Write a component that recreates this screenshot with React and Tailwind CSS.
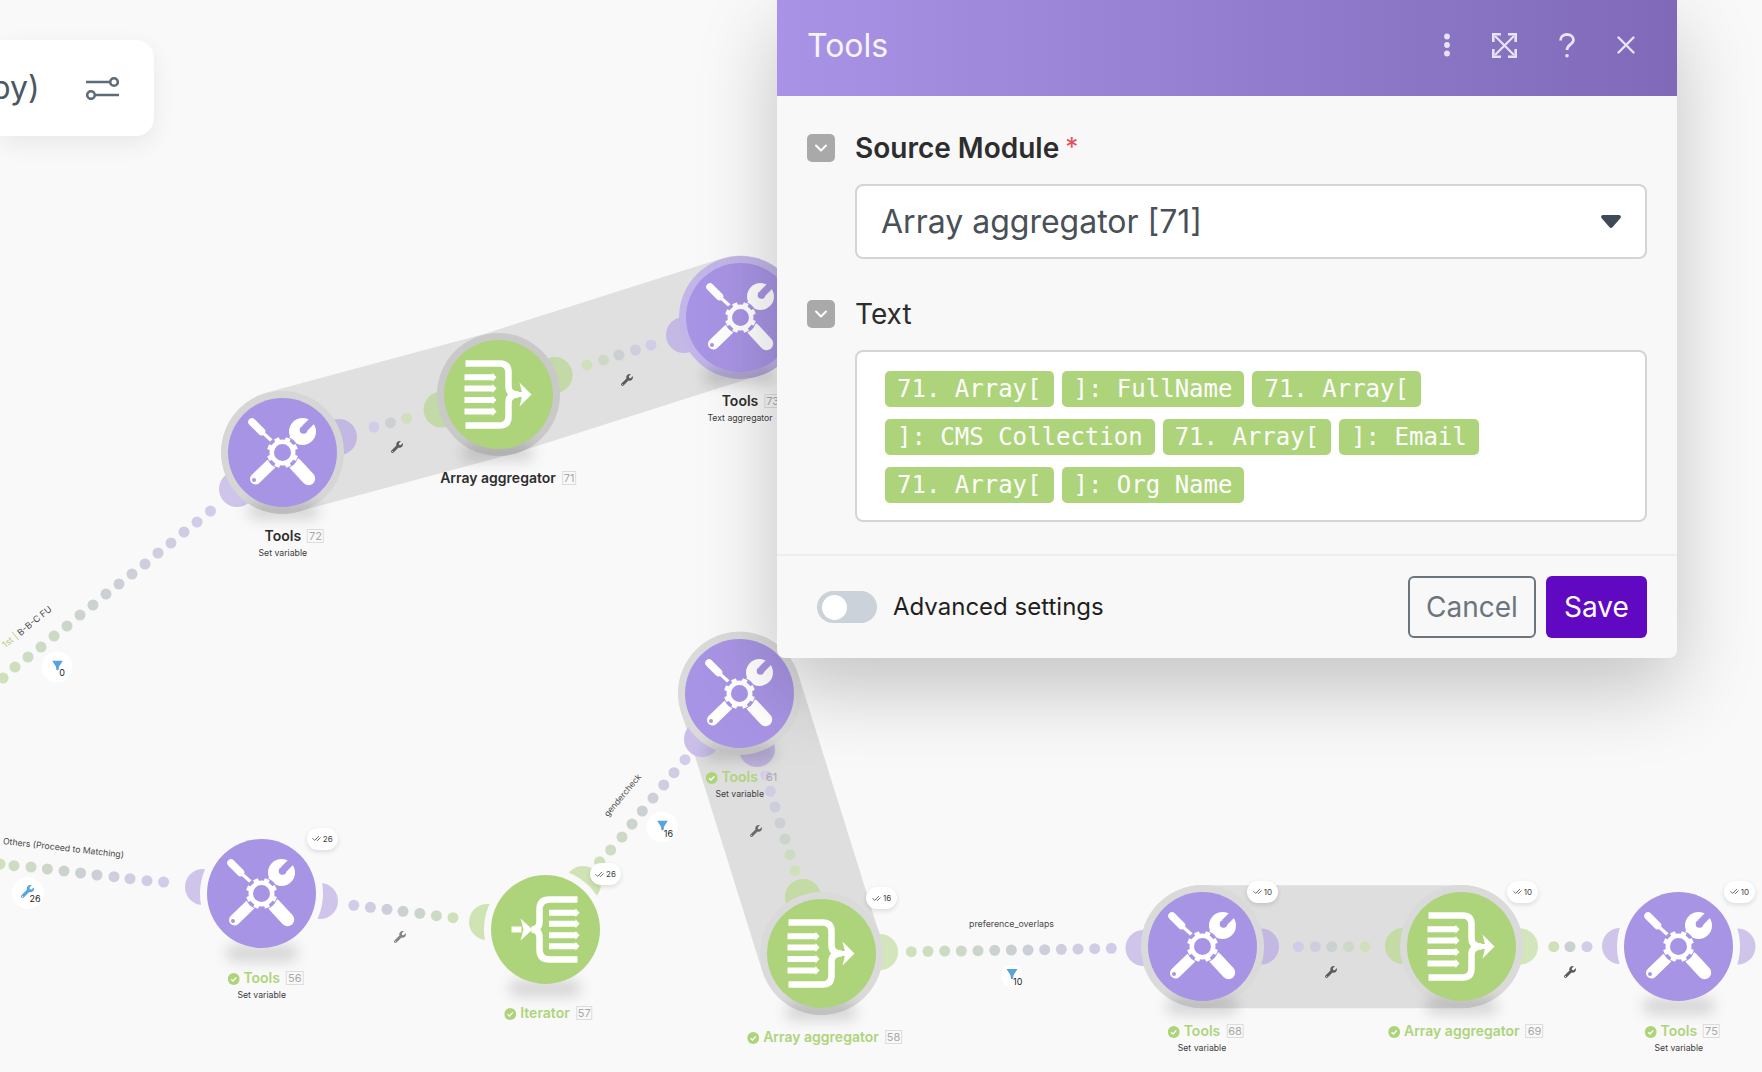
import React from 'react';
import { ChevronDown, CheckCheck } from 'lucide-react';
import { FaWrench } from 'react-icons/fa';

const PURPLE = '#a894e4';
const GREEN = '#aed47b';

const hex = (c) => [1, 3, 5].map((i) => parseInt(c.slice(i, i + 2), 16));
const mix = (a, b, t) => {
  const A = hex(a), B = hex(b);
  return `rgb(${A.map((v, i) => Math.round(v + (B[i] - v) * t)).join(',')})`;
};
const ramp = (t) => (t < 0.5 ? mix('#cfe0bb', '#cbd0d3', t * 2) : mix('#cbd0d3', '#d2cbea', (t - 0.5) * 2));

// each run of dots goes from its green end to its purple end
const dotRuns = [
  [[3, 678], [15, 667], [28, 657], [41, 647], [54, 636], [67, 626], [80, 615], [93, 605], [106, 594], [119, 584], [132, 574], [145, 564], [158, 553], [171, 543], [184, 532], [197, 522], [210.5, 511]],
  [[406.6, 418.3], [390.5, 422.7], [374, 427]],
  [[587, 365], [603.5, 360], [619, 355], [635.5, 350], [651, 345]],
  [[0, 864], [14, 865.7], [31, 867], [47.4, 869], [64, 871], [80.6, 873], [97, 875], [114, 876.7], [130, 878.7], [147, 880.7], [163.6, 882]],
  [[453, 917.7], [436.4, 915.7], [419.8, 913.3], [403, 911.3], [387, 909.3], [370.4, 907.3], [353.8, 905.3]],
  [[599.6, 861.7], [610.7, 850], [622, 837], [632, 824], [642.3, 811], [653, 798], [663.7, 785], [674, 772.7], [685, 759.7]],
  [[795, 870.7], [790, 854.7], [785, 839], [780, 823], [775, 807], [770.3, 791.3], [765.7, 775.3]],
  [[911.3, 951.7], [928, 951.3], [944.7, 951], [961.3, 951], [978, 950.7], [994.7, 950.3], [1011.3, 950], [1028, 950], [1044.7, 949.7], [1061.3, 949.3], [1078, 949], [1094.7, 948.7], [1111.3, 948.3]],
  [[1365, 946.7], [1348.6, 946.7], [1331.7, 946.7], [1315.3, 946.7], [1298.4, 946.7]],
  [[1553.8, 946.7], [1570, 946.7], [1587, 946.7]],
];

const moons = [
  [237, 489, '#cfc5ea'], [339, 437, '#c3b8e2'], [441.6, 409.5, '#c3d9a8'], [554.6, 375, '#c3d9a8'], [684, 335, '#c4b8e4'],
  [203, 887, '#cfc5ea'], [320, 901, '#cfc5ea'], [487, 922, '#d0e3b5'], [583, 884, '#d0e3b5'],
  [702, 739, '#cbbfe9'], [757, 749, '#c0b4df'], [803, 897, '#c4dba6'], [880, 952, '#d3e5ba'],
  [1143.5, 948, '#cfc5ea'], [1261, 946.5, '#c3b8e2'], [1403, 946, '#c4dba6'], [1520, 946.5, '#d3e5ba'],
  [1620, 946, '#cfc5ea'], [1737.5, 946.5, '#cfc5ea'],
];

const nodes = [
  { x: 282.8, y: 452, kind: 'tools', name: 'Tools', idx: 72, sub: 'Set variable', ring: 'bg-[#d6d6d6]' },
  { x: 498, y: 394, kind: 'agg', name: 'Array aggregator', idx: 71, ring: 'bg-[#c9c9c9]' },
  { x: 740, y: 317, kind: 'tools', name: 'Tools', idx: 73, sub: 'Text aggregator', ring: 'bg-[#c2b6e8]' },
  { x: 739.7, y: 693, kind: 'tools', name: 'Tools', idx: 61, sub: 'Set variable', ok: true, ring: 'bg-[#dadada]' },
  { x: 261.7, y: 893.7, kind: 'tools', name: 'Tools', idx: 56, sub: 'Set variable', ok: true, count: 26, ring: 'bg-[#f9f9f9]' },
  { x: 545, y: 929, kind: 'iter', name: 'Iterator', idx: 57, ok: true, count: 26, ring: 'bg-[#f9f9f9]' },
  { x: 821, y: 953, kind: 'agg', name: 'Array aggregator', idx: 58, ok: true, count: 16, ring: 'bg-[#dadada]' },
  { x: 1202, y: 946.7, kind: 'tools', name: 'Tools', idx: 68, sub: 'Set variable', ok: true, count: 10, ring: 'bg-[#dadada]' },
  { x: 1461.8, y: 946.7, kind: 'agg', name: 'Array aggregator', idx: 69, ok: true, count: 10, ring: 'bg-[#dadada]' },
  { x: 1678.8, y: 946.7, kind: 'tools', name: 'Tools', idx: 75, sub: 'Set variable', ok: true, count: 10, ring: 'bg-[#f9f9f9]' },
];

const wrenches = [
  [397, 446.7, '#5c5c5c'], [627, 380, '#5c5c5c'], [400, 936.7, '#858585'], [756, 830.7, '#6a6a6a'], [1331.3, 972, '#5c5c5c'], [1570, 972, '#5c5c5c'],
];

const tagRows = ['71. Array[', ']: FullName', '71. Array[', ']: CMS Collection', '71. Array[', ']: Email', '71. Array[', ']: Org Name'];

function ToolsIcon() {
  const teeth = [0, 45, 90, 135, 180, 225, 270, 315];
  return (
    <svg viewBox="-54.5 -54.5 109 109" className="absolute inset-0 h-full w-full" fill="none">
      <g stroke="#fff" strokeLinecap="round">
        <path d="M-30.5-30.5L-21-21" strokeWidth="7.5" />
        <path d="M-21-21L-9-10" strokeWidth="3.2" strokeLinecap="butt" />
        <path d="M-12 12L-27 26.5" strokeWidth="11" />
        <path d="M13 12L26 26" strokeWidth="13.5" />
        <path d="M8-10L14-16" strokeWidth="9" />
      </g>
      <circle cx="20" cy="-21" r="13.5" fill="#fff" />
      <path d="M22-24L36-38" stroke={PURPLE} strokeWidth="7" />
      <circle cx="21" cy="-22.5" r="3.8" fill={PURPLE} />
      <circle cx="-28.5" cy="27.5" r="2" fill={PURPLE} />
      <circle r="16.5" fill={PURPLE} />
      <circle r="10.75" stroke="#fff" strokeWidth="4.5" />
      {teeth.map((a) => (
        <rect key={a} x="-2.6" y="-15.5" width="5.2" height="4" fill="#fff" transform={`rotate(${a + 22})`} />
      ))}
    </svg>
  );
}

function Arrow({ y, x1, x2 }) {
  return (
    <path d={`M${x1} ${y - 3}H${x2 - 4}V${y - 4.5}L${x2} ${y}L${x2 - 4} ${y + 4.5}V${y + 3}H${x1}Z`} fill="#fff" />
  );
}

function AggIcon() {
  return (
    <svg viewBox="-54.5 -54.5 109 109" className="absolute inset-0 h-full w-full" fill="none">
      <path d="M-33-31H1Q10-31 10-22V-8Q10 0 20 0Q10 0 10 8V22Q10 31 1 31H-33" stroke="#fff" strokeWidth="6.5" />
      <path d="M14-2.5H26V2.5H14Z" fill="#fff" />
      <path d="M21-12L33 0L21 12L24 0Z" fill="#fff" />
      {[-17.3, -6, 5.6, 17].map((y) => (
        <Arrow key={y} y={y} x1={-34} x2={-2} />
      ))}
    </svg>
  );
}

function IterIcon() {
  return (
    <svg viewBox="-54.5 -54.5 109 109" className="absolute inset-0 h-full w-full" fill="none">
      <path d="M32-30H4Q-6-30-6-20V-8Q-6 0-14 0Q-6 0-6 8V20Q-6 30 4 30H32" stroke="#fff" strokeWidth="6.5" />
      <path d="M-34-3H-24V3H-34Z" fill="#fff" />
      <path d="M-25-11L-13 0L-25 11L-22 0Z" fill="#fff" />
      {[-16.7, -5.7, 5.7, 16.7].map((y) => (
        <Arrow key={y} y={y} x1={3.5} x2={34} />
      ))}
    </svg>
  );
}

function OkMark() {
  return (
    <svg viewBox="0 0 12 12" className="absolute top-[4px] right-[calc(100%+4px)] h-[12px] w-[12px]" fill="none">
      <circle cx="6" cy="6" r="6" fill={GREEN} />
      <path d="M3.4 6.2L5.3 8L8.6 4.4" stroke="#fff" strokeWidth="1.3" />
    </svg>
  );
}

function Node({ n }) {
  const Icon = n.kind === 'tools' ? ToolsIcon : n.kind === 'agg' ? AggIcon : IterIcon;
  return (
    <div className="absolute h-0 w-0" style={{ left: n.x, top: n.y }}>
      <div className={`absolute top-[-61.5px] left-[-61.5px] h-[123px] w-[123px] rounded-full ${n.ring}`} />
      <div className="absolute top-[51px] left-[-36px] h-[16px] w-[72px] rounded-full bg-black/15 blur-[7px]" />
      <div
        className={`absolute top-[-54.5px] left-[-54.5px] h-[109px] w-[109px] rounded-full ${
          n.kind === 'tools' ? 'bg-[#a894e4]' : 'bg-[#aed47b]'
        }`}
      >
        <Icon />
      </div>
      <div className="absolute top-[75px] left-0 -translate-x-1/2 whitespace-nowrap text-center">
        <div className="h-[18px] text-[14px] leading-[18px] font-semibold">
          <span className={`relative inline-block ${n.ok ? 'text-[#aed47b]' : 'text-[#2e2e2e]'}`}>
            {n.ok && <OkMark />}
            {n.name}
            <span className="absolute top-[2px] left-[calc(100%+6px)] h-[14px] border border-[#dcdcdc] px-[1px] text-[11px] leading-[12px] font-normal text-[#a8a8a8]">
              {n.idx}
            </span>
          </span>
        </div>
        {n.sub && <div className="mt-[3px] text-[8.7px] leading-[11px] text-[#3c3c3c]">{n.sub}</div>}
      </div>
      {n.count && (
        <div className="absolute top-[-66px] left-[45px] flex h-[22px] w-[31px] items-center justify-center gap-[2px] rounded-full bg-white text-[8px] text-[#444] shadow-[0_2px_5px_rgba(0,0,0,0.12)]">
          <CheckCheck size={9} strokeWidth={2} />
          {n.count}
        </div>
      )}
    </div>
  );
}

function Funnel() {
  return (
    <svg viewBox="0 0 12 11" className="block h-[10px] w-[12px]">
      <path d="M0 0H12L7.8 6.5L7 11H5L4.2 6.5Z" fill="#57a3dd" />
    </svg>
  );
}

function Bubble({ x, y, size, label, children }) {
  return (
    <div
      className="absolute flex -translate-x-1/2 -translate-y-1/2 items-center justify-center rounded-full bg-white"
      style={{ left: x, top: y, width: size, height: size }}
    >
      <span className="-mt-[3px]">{children}</span>
      <span className="absolute top-[54%] left-[56%] text-[9px] leading-[10px] text-[#222]">{label}</span>
    </div>
  );
}

function Canvas() {
  return (
    <>
      <svg className="absolute inset-0 h-full w-full" viewBox="0 0 1762 1072" fill="none">
        <path d="M282.8 452L498 394L740 317" stroke="#e0e0e0" strokeWidth="123" strokeLinecap="round" strokeLinejoin="round" />
        <path d="M739.7 693L821 953" stroke="#dedede" strokeWidth="123" strokeLinecap="round" />
        <path d="M1202 946.7H1461.8" stroke="#dedede" strokeWidth="123" strokeLinecap="round" />
        {moons.map(([x, y, c]) => (
          <circle key={`${x}-${y}`} cx={x} cy={y} r="18" fill={c} />
        ))}
        {dotRuns.map((run, i) =>
          run.map(([x, y], j) => (
            <circle key={`${i}-${j}`} cx={x} cy={y} r="5.5" fill={ramp(run.length > 1 ? j / (run.length - 1) : 0)} />
          ))
        )}
      </svg>

      {nodes.map((n) => (
        <Node key={n.idx} n={n} />
      ))}

      {wrenches.map(([x, y, c]) => (
        <FaWrench
          key={`${x}`}
          size={12}
          color={c}
          className="absolute -translate-x-1/2 -translate-y-1/2"
          style={{ left: x, top: y }}
        />
      ))}

      <Bubble x={57.3} y={666.7} size={31} label="0"><Funnel /></Bubble>
      <Bubble x={662} y={827.3} size={31} label="16"><Funnel /></Bubble>
      <Bubble x={1011.7} y={975.7} size={22} label="10"><Funnel /></Bubble>
      <Bubble x={27.7} y={892.7} size={32} label="26"><FaWrench size={13} color="#57a3dd" /></Bubble>

      <div className="absolute top-[836px] left-[3px] origin-left rotate-[6.5deg] text-[8.7px] leading-[11px] whitespace-nowrap text-[#4a4a4a]">
        Others (Proceed to Matching)
      </div>
      <div className="absolute top-[776px] left-[594px] w-[58px] translate-y-[14px] -rotate-[50deg] text-center text-[8.5px] leading-[11px] whitespace-nowrap text-[#4a4a4a]">
        gendercheck
      </div>
      <div className="absolute top-[918px] left-[969px] text-[8.8px] leading-[12px] whitespace-nowrap text-[#4a4a4a]">
        preference_overlaps
      </div>
      <div className="absolute top-[620px] left-[-4px] w-[64px] -rotate-[39deg] text-[9px] leading-[11px] whitespace-nowrap text-[#4a4a4a]">
        <span className="text-[#aed47b]">1st | </span>B-B-C FU
      </div>

      <div className="absolute top-[40px] left-0 flex h-[96px] w-[154px] items-center overflow-hidden rounded-r-[18px] bg-white shadow-[0_8px_24px_rgba(0,0,0,0.07)]">
        <span className="-ml-[9px] text-[32px] leading-none text-[#4b5763]">py)</span>
        <svg viewBox="0 0 34 24" className="ml-[46px] h-[24px] w-[34px]" fill="none" stroke="#5d6a78" strokeWidth="2.6">
          <path d="M0 6H23" />
          <circle cx="28" cy="6" r="3.8" />
          <circle cx="5" cy="19" r="3.8" />
          <path d="M10 19H33" />
        </svg>
      </div>
    </>
  );
}

function HeaderIcons() {
  return (
    <div className="flex items-center pr-[42px] pb-[6px] text-[#e9e3f8]">
      <svg viewBox="0 0 6 24" className="h-[24px] w-[6px]" fill="currentColor">
        <circle cx="3" cy="3.5" r="2.9" />
        <circle cx="3" cy="12" r="2.9" />
        <circle cx="3" cy="20.5" r="2.9" />
      </svg>
      <svg viewBox="0 0 25 25" className="ml-[42px] h-[25px] w-[25px]" fill="none" stroke="currentColor" strokeWidth="2.6">
        <path d="M1.3 9V1.3H9M16 1.3H23.7V9M1.3 16V23.7H9M23.7 16V23.7H16" />
        <path d="M3 3L22 22M22 3L3 22" strokeWidth="2.2" />
      </svg>
      <svg viewBox="0 0 16 25" className="ml-[42px] h-[25px] w-[16px]" fill="none" stroke="currentColor" strokeWidth="2.8">
        <path d="M1.5 7.5C1.5 3.8 4.4 1.5 8 1.5C11.6 1.5 14.5 3.8 14.5 7C14.5 11.5 8 11.5 8 17" />
        <circle cx="8" cy="22.7" r="1.8" fill="currentColor" stroke="none" />
      </svg>
      <svg viewBox="0 0 18 18" className="ml-[42px] h-[18px] w-[18px]" fill="none" stroke="currentColor" strokeWidth="2.4" strokeLinecap="round">
        <path d="M1.5 1.5L16.5 16.5M16.5 1.5L1.5 16.5" />
      </svg>
    </div>
  );
}

function Check() {
  return (
    <div className="flex h-[28px] w-[28px] shrink-0 items-center justify-center rounded-[5px] bg-[#a9a9a9] text-white">
      <ChevronDown size={20} strokeWidth={2.4} />
    </div>
  );
}

function Modal() {
  return (
    <div className="absolute top-0 left-[777px] flex h-[658px] w-[900px] flex-col rounded-b-[8px] bg-[#f8f8f8] shadow-[0_30px_80px_rgba(0,0,0,0.22)]">
      <div className="flex h-[96px] shrink-0 items-center justify-between bg-gradient-to-r from-[#a993e6] to-[#7f69b8] pl-[30px]">
        <span className="pb-[4px] text-[32px] leading-none text-white/90">Tools</span>
        <HeaderIcons />
      </div>
      <div className="flex-1 px-[30px] pt-[38px]">
        <div className="flex h-[28px] items-center gap-[20px]">
          <Check />
          <span className="flex text-[28px] leading-none font-semibold text-[#2d2d2d]">
            Source Module
            <span className="ml-[6px] text-[26px] font-normal text-[#e0505e]">*</span>
          </span>
        </div>
        <div className="mt-[22px] ml-[48px] flex h-[75px] items-center justify-between rounded-[8px] border-2 border-[#d4d4d4] bg-white pr-[24px] pl-[24px]">
          <span className="text-[32px] leading-none text-[#495057]">Array aggregator [71]</span>
          <svg viewBox="0 0 20 13" className="h-[13px] w-[20px]" fill="#3f4a56">
            <path d="M2 0H18C19.6 0 20.5 1.8 19.5 3L11.5 12.2C10.7 13.2 9.3 13.2 8.5 12.2L.5 3C-.5 1.8.4 0 2 0Z" />
          </svg>
        </div>
        <div className="mt-[41px] flex h-[28px] items-center gap-[20px]">
          <Check />
          <span className="text-[28px] leading-none text-[#2d2d2d]">Text</span>
        </div>
        <div className="mt-[22px] ml-[48px] h-[172px] rounded-[8px] border-2 border-[#d4d4d4] bg-white pt-[19px] pr-[28px] pl-[28px]">
          <div className="flex flex-wrap gap-x-[8px] gap-y-[12px]">
            {tagRows.map((t, i) => (
              <span
                key={i}
                className="h-[36px] rounded-[5px] bg-[#aed47b] px-[12px] font-['DejaVu_Sans_Mono',monospace] text-[24px] leading-[36px] whitespace-pre text-white"
              >
                {t}
              </span>
            ))}
          </div>
        </div>
      </div>
      <div className="flex h-[104px] shrink-0 items-center justify-between border-t-2 border-[#eeeeee] pr-[30px] pl-[40px]">
        <div className="flex items-center gap-[16px]">
          <div className="flex h-[32px] w-[60px] items-center rounded-full bg-[#cbd2da] pl-[5px]">
            <div className="h-[25px] w-[25px] rounded-full bg-white" />
          </div>
          <span className="text-[24px] leading-none text-[#1f1f1f]">Advanced settings</span>
        </div>
        <div className="flex gap-[10px]">
          <button className="h-[62px] w-[128px] rounded-[6px] border-2 border-[#6c757d] text-[28px] text-[#6c757d]">Cancel</button>
          <button className="h-[62px] w-[101px] rounded-[6px] bg-[#6108c3] text-[28px] text-white">Save</button>
        </div>
      </div>
    </div>
  );
}

export default function App() {
  return (
    <div className="relative h-[1072px] w-[1762px] overflow-hidden bg-[#f9f9f9] font-['Inter',sans-serif]">
      <Canvas />
      <Modal />
    </div>
  );
}
